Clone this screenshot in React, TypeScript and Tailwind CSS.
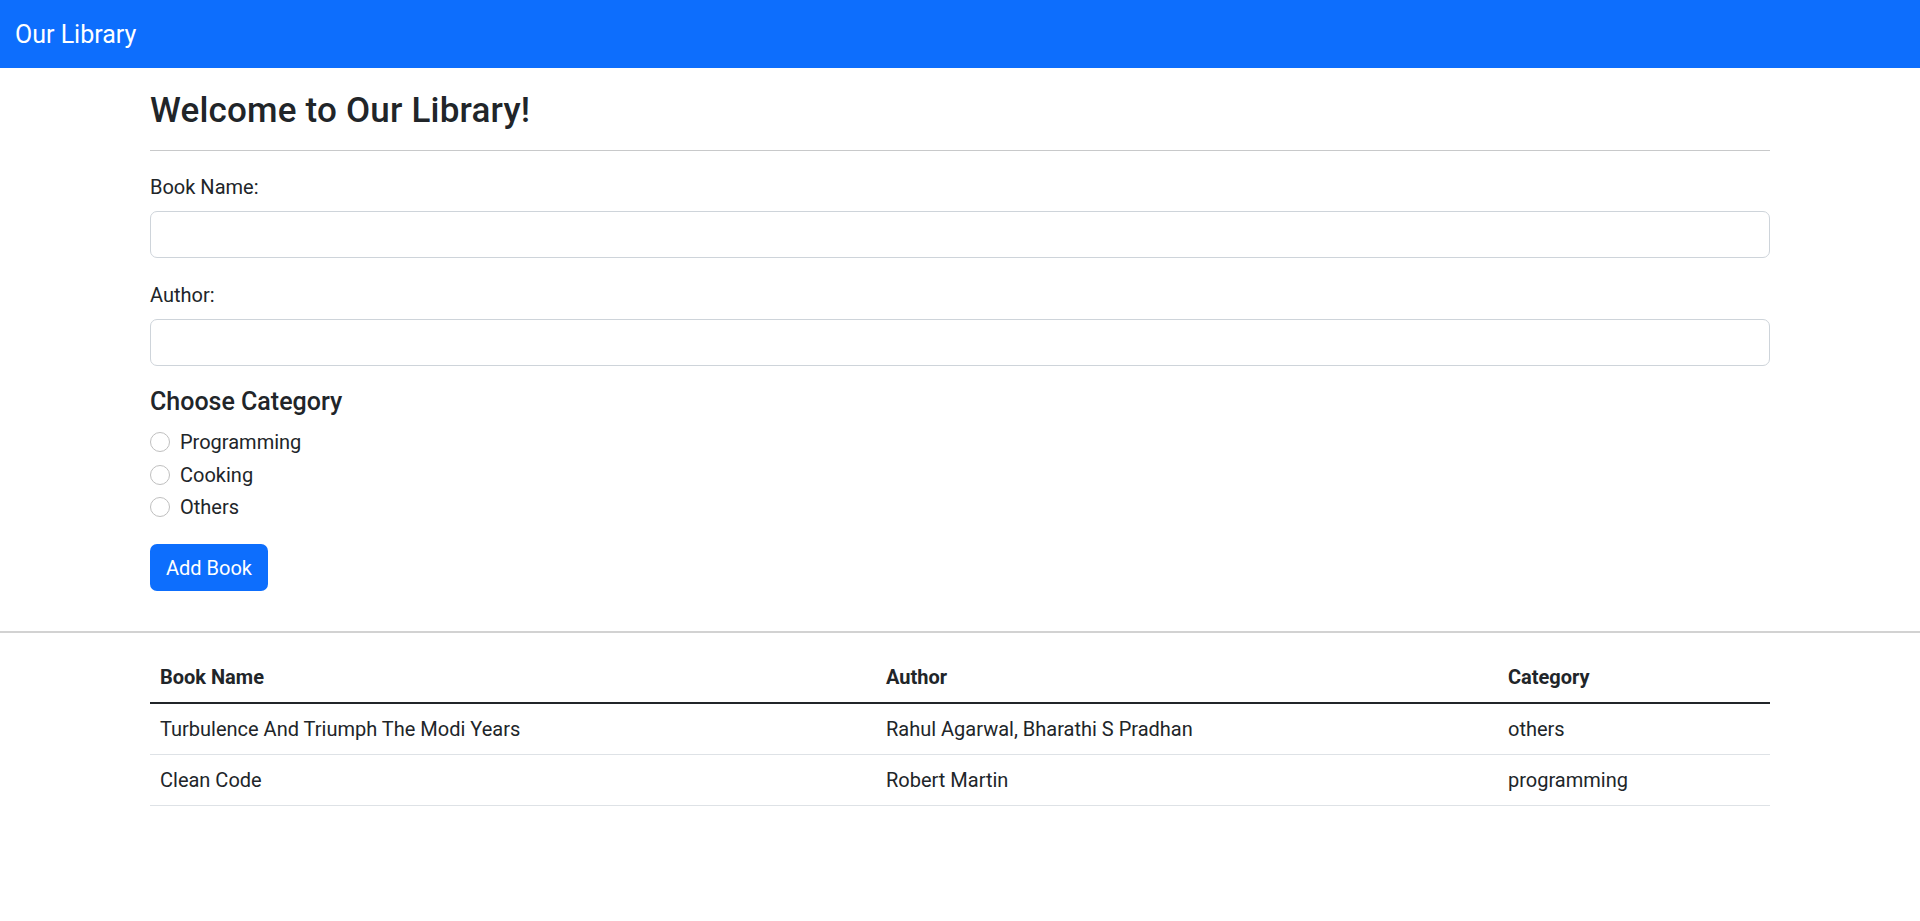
import { useState } from "react"

interface Book {
  name: string
  author: string
  category: string
}

const categories = ["Programming", "Cooking", "Others"]

export default function App() {
  const [books] = useState<Book[]>([
    { name: "Turbulence And Triumph The Modi Years", author: "Rahul Agarwal, Bharathi S Pradhan", category: "others" },
    { name: "Clean Code", author: "Robert Martin", category: "programming" },
  ])
  const [name, setName] = useState("")
  const [author, setAuthor] = useState("")
  const [category, setCategory] = useState("")

  return (
    <div className="min-h-screen bg-white font-['Roboto','Liberation_Sans',sans-serif] text-[20px] leading-[30px] text-[#212529]">
      {/* Navbar */}
      <nav className="flex h-[68px] items-center bg-[#0d6efd] px-[15px]">
        <span className="text-[25px] leading-[37px] text-white">Our Library</span>
      </nav>

      {/* Form */}
      <div className="mx-auto w-[1620px]">
        <h3 className="mt-[22px] text-[35px] font-medium leading-[42px] tracking-[0.2px]">Welcome to Our Library!</h3>
        <hr className="mt-[18px] border-t border-[#c8c9ca]" />

        <div className="mt-[21px]">
          <label className="block">Book Name:</label>
          <input
            type="text"
            value={name}
            onChange={(e) => setName(e.target.value)}
            className="mt-[9px] block h-[47px] w-full rounded-[7px] border border-[#ced4da] px-[15px] outline-none"
          />
        </div>
        <div className="mt-[22px]">
          <label className="block">Author:</label>
          <input
            type="text"
            value={author}
            onChange={(e) => setAuthor(e.target.value)}
            className="mt-[9px] block h-[47px] w-full rounded-[7px] border border-[#ced4da] px-[15px] outline-none"
          />
        </div>

        <h5 className="mt-[21px] text-[25px] font-medium leading-[30px]">Choose Category</h5>
        <div className="mt-[10px] flex flex-col gap-[2.5px]">
          {categories.map((c) => (
            <label key={c} className="flex h-[30px] items-center gap-[10px]">
              <input
                type="radio"
                name="category"
                checked={category === c}
                onChange={() => setCategory(c)}
                className="h-[20px] w-[20px] appearance-none rounded-full border border-[#bfbfbf] bg-white checked:border-[#0d6efd] checked:bg-[#0d6efd]"
              />
              {c}
            </label>
          ))}
        </div>

        <button className="mt-[22px] h-[47px] rounded-[7px] bg-[#0d6efd] px-[16px] text-white">Add Book</button>
      </div>

      <div className="mt-[40px] border-t-2 border-[#d2d2d2]" />

      {/* Table */}
      <div className="mx-auto mt-[19px] w-[1620px]">
        <table className="w-full table-fixed">
          <colgroup>
            <col className="w-[726px]" />
            <col className="w-[622px]" />
            <col />
          </colgroup>
          <thead>
            <tr className="border-b-2 border-[#212529]">
              {["Book Name", "Author", "Category"].map((h) => (
                <th key={h} className="px-[10px] py-[10px] text-left font-bold">
                  {h}
                </th>
              ))}
            </tr>
          </thead>
          <tbody>
            {books.map((b) => (
              <tr key={b.name} className="border-b border-[#dee2e6]">
                <td className="px-[10px] py-[10px]">{b.name}</td>
                <td className="px-[10px] py-[10px]">{b.author}</td>
                <td className="px-[10px] py-[10px]">{b.category}</td>
              </tr>
            ))}
          </tbody>
        </table>
      </div>
    </div>
  )
}
